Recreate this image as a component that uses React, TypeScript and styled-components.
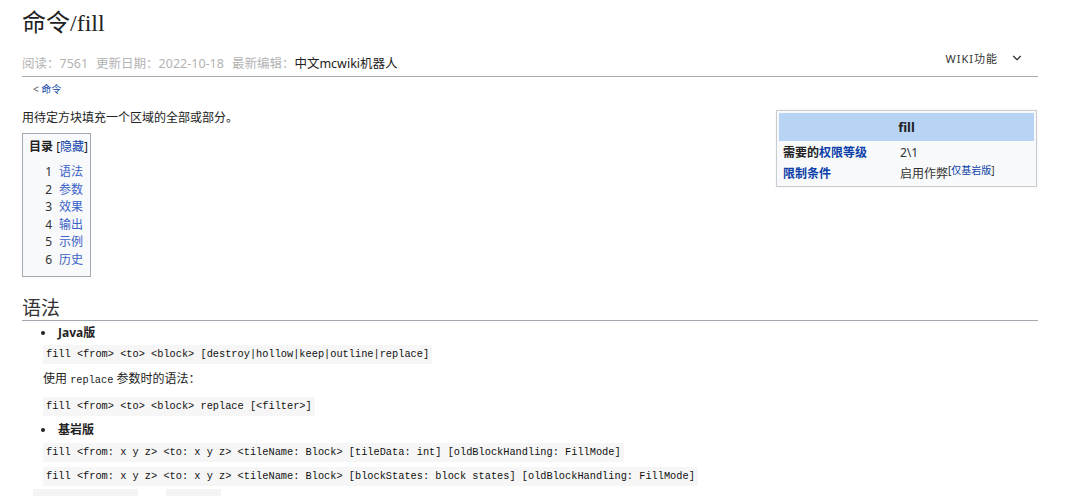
import React from "react";
import styled, { createGlobalStyle } from "styled-components";
import { ChevronDown } from "lucide-react";

const GlobalStyle = createGlobalStyle`
  html, body { margin: 0; padding: 0; background: #ffffff; }
  body {
    font-family: "Noto Sans", "Noto Sans CJK SC", sans-serif;
    color: #222222;
    font-size: 12px;
  }
  * { box-sizing: border-box; }
`;

const Page = styled.div`
  width: 1038px;
  padding: 0 0 0 22px;
`;

const Title = styled.h1`
  margin: 0;
  padding-top: 7px;
  height: 40px;
  font-family: "Liberation Serif", "Noto Sans CJK SC", serif;
  font-weight: normal;
  font-size: 24px;
  line-height: 32px;
  color: #222;
`;

const HeaderBar = styled.div`
  margin-top: 8px;
  height: 29px;
  display: flex;
  justify-content: space-between;
  border-bottom: 1px solid #a7abb0;
`;

const Meta = styled.div`
  align-self: flex-end;
  padding-bottom: 2px;
  line-height: 20px;
  font-size: 12.5px;
  color: #b3b3b3;
  display: flex;
  gap: 8px;
`;

const Editor = styled.span`
  color: #222;
`;

const WikiMenu = styled.div`
  align-self: center;
  margin-bottom: 9px;
  display: flex;
  align-items: center;
  gap: 12px;
  font-size: 11px;
  letter-spacing: 1px;
  color: #333;
  padding-right: 14px;
`;

const Breadcrumb = styled.div`
  margin-top: 4px;
  padding-left: 11px;
  font-size: 10px;
  line-height: 16px;
  color: #555;
`;

const Link = styled.a<{ $tone?: "dark" | "light" }>`
  color: ${(p) => (p.$tone === "light" ? "#3a62c8" : "#0b3ea8")};
  text-decoration: none;
`;

const Body = styled.div`
  display: flow-root;
  font-size: 12px;
`;

const Infobox = styled.table`
  float: right;
  margin-top: 13px;
  margin-right: 1px;
  width: 261px;
  border: 1px solid #c8ccd1;
  background: #f8f9fa;
  border-spacing: 0;
  padding: 2px 2px 3px;
  font-size: 12px;
  box-shadow: 0 0 2px rgba(0, 0, 0, 0.08);
`;

const InfoHead = styled.th`
  background: #b8d4f4;
  height: 28px;
  font-size: 13px;
  font-weight: bold;
  text-align: center;
  color: #222;
`;

const InfoLabel = styled.td`
  height: 21px;
  width: 119px;
  padding: 2px 0 0 4px;
  font-weight: bold;
  color: #222;
  line-height: 19px;
  vertical-align: top;
`;

const InfoValue = styled.td`
  padding: 2px 0 0 2px;
  color: #333;
  line-height: 19px;
  vertical-align: top;
`;

const Sup = styled.sup`
  font-size: 10px;
  line-height: 0;
  vertical-align: 4px;
`;

const Para = styled.p<{ $top?: number; $indent?: number }>`
  margin: ${(p) => p.$top ?? 0}px 0 0 ${(p) => p.$indent ?? 0}px;
  line-height: 18px;
  font-size: 12px;
`;

const Toc = styled.div`
  display: inline-block;
  margin-top: 6px;
  width: 69px;
  height: 144px;
  border: 1px solid #a2a9b1;
  background: #f8f9fa;
  padding: 4px 6px 0 6px;
`;

const TocTitle = styled.div`
  line-height: 18px;
  font-size: 12px;
  white-space: nowrap;
  b { font-weight: bold; }
`;

const TocList = styled.ol`
  list-style: none;
  margin: 7px 0 0;
  padding: 0 0 0 16px;
`;

const TocItem = styled.li`
  display: flex;
  gap: 7px;
  line-height: 17.6px;
  font-size: 12px;
`;

const TocNum = styled.span`
  color: #333;
  width: 7px;
  text-align: right;
`;

const H2 = styled.h2`
  clear: both;
  margin: 20px 0 0;
  height: 24px;
  font-family: "Liberation Serif", "Noto Sans CJK SC", serif;
  font-weight: normal;
  font-size: 19px;
  line-height: 23px;
  color: #333;
  border-bottom: 1px solid #a2a9b1;
`;

const BulletList = styled.ul<{ $top?: number }>`
  list-style: none;
  margin: ${(p) => p.$top ?? 0}px 0 0;
  padding: 0 0 0 19px;
`;

const Bullet = styled.li`
  display: flex;
  align-items: center;
  line-height: 18px;
  font-weight: bold;
  font-size: 12px;
  color: #222;
  &::before {
    content: "";
    width: 4px;
    height: 4px;
    border-radius: 50%;
    background: #222;
    margin-right: 13px;
  }
`;

const CodeLine = styled.div<{ $top?: number }>`
  display: table;
  margin: ${(p) => p.$top ?? 0}px 0 0 21px;
  padding: 0 3px 1px;
  background: #f6f6f6;
  font-family: "Liberation Mono", monospace;
  font-size: 10.3px;
  line-height: 18px;
  color: #111;
  white-space: pre;
`;

const InlineCode = styled.code`
  font-family: "Liberation Mono", monospace;
  font-size: 10.3px;
`;

const NextRow = styled.div`
  display: flex;
  align-items: flex-start;
  gap: 8px;
  margin: 3px 0 0 11px;
  font-size: 12px;
  line-height: 18px;
`;

const NextCode = styled.code`
  display: inline-block;
  padding: 16px 3px 2px;
  background: #f4f4f4;
  font-family: "Liberation Mono", monospace;
  font-size: 10.3px;
  line-height: 18px;
`;

const NextText = styled.span`
  padding-top: 16px;
`;

export default function App() {
  return (
    <>
      <GlobalStyle />
      <Page>
        <Title>命令/fill</Title>
        <HeaderBar>
          <Meta>
            <span>阅读：7561</span>
            <span>更新日期：2022-10-18</span>
            <span>
              最新编辑：<Editor>中文mcwiki机器人</Editor>
            </span>
          </Meta>
          <WikiMenu>
            <span>WIKI功能</span>
            <ChevronDown size={14} strokeWidth={2} color="#333" />
          </WikiMenu>
        </HeaderBar>
        <Breadcrumb>
          &lt; <Link>命令</Link>
        </Breadcrumb>
        <Body>
          <Infobox>
            <tbody>
              <tr>
                <InfoHead colSpan={2}>fill</InfoHead>
              </tr>
              <tr>
                <InfoLabel>
                  需要的<Link>权限等级</Link>
                </InfoLabel>
                <InfoValue>2\1</InfoValue>
              </tr>
              <tr>
                <InfoLabel>
                  <Link>限制条件</Link>
                </InfoLabel>
                <InfoValue>
                  启用作弊
                  <Sup>
                    [<Link>仅基岩版</Link>]
                  </Sup>
                </InfoValue>
              </tr>
            </tbody>
          </Infobox>
          <Para $top={12}>用待定方块填充一个区域的全部或部分。</Para>
          <Toc>
            <TocTitle>
              <b>目录</b> [<Link>隐藏</Link>]
            </TocTitle>
            <TocList>
              {["语法", "参数", "效果", "输出", "示例", "历史"].map((t, i) => (
                <TocItem key={t}>
                  <TocNum>{i + 1}</TocNum>
                  <Link $tone="light">{t}</Link>
                </TocItem>
              ))}
            </TocList>
          </Toc>
          <H2>语法</H2>
          <BulletList $top={3}>
            <Bullet>Java版</Bullet>
          </BulletList>
          <CodeLine $top={3}>
            {"fill <from> <to> <block> [destroy|hollow|keep|outline|replace]"}
          </CodeLine>
          <Para $top={6} $indent={21}>
            使用 <InlineCode>replace</InlineCode> 参数时的语法：
          </Para>
          <CodeLine $top={8}>{"fill <from> <to> <block> replace [<filter>]"}</CodeLine>
          <BulletList $top={5}>
            <Bullet>基岩版</Bullet>
          </BulletList>
          <CodeLine $top={4}>
            {"fill <from: x y z> <to: x y z> <tileName: Block> [tileData: int] [oldBlockHandling: FillMode]"}
          </CodeLine>
          <CodeLine $top={5}>
            {"fill <from: x y z> <to: x y z> <tileName: Block> [blockStates: block states] [oldBlockHandling: FillMode]"}
          </CodeLine>
          <NextRow>
            <NextCode>oldBlockHandling</NextCode>
            <NextText>为</NextText>
            <NextCode>FillMode</NextCode>
          </NextRow>
        </Body>
      </Page>
    </>
  );
}
